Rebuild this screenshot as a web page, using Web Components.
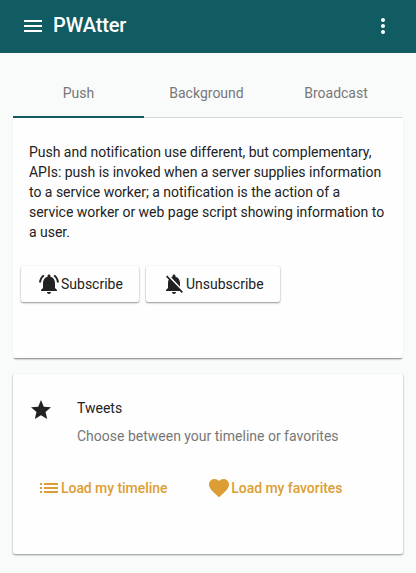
<!DOCTYPE html>
<html lang="en">
<head>
<meta charset="utf-8">
<title>PWAtter</title>
<style>
body{margin:0;height:573px;overflow:hidden;background:#f9fbfb;font-family:Roboto,"Liberation Sans",sans-serif;font-size:14px;line-height:20px;color:#222}
</style>
</head>
<body>
<pw-app></pw-app>
<script>
const icons={
menu:'M3 18h18v-2H3v2zm0-5h18v-2H3v2zm0-7v2h18V6H3z',
more:'M12 8c1.1 0 2-.9 2-2s-.9-2-2-2-2 .9-2 2 .9 2 2 2zm0 2c-1.1 0-2 .9-2 2s.9 2 2 2 2-.9 2-2-.9-2-2-2zm0 6c-1.1 0-2 .9-2 2s.9 2 2 2 2-.9 2-2-.9-2-2-2z',
bell:'M7.58 4.08L6.15 2.65C3.75 4.48 2.17 7.3 2.03 10.5h2c.15-2.65 1.51-4.97 3.55-6.42zm12.39 6.42h2c-.15-3.2-1.73-6.02-4.12-7.85l-1.42 1.43c2.02 1.45 3.39 3.77 3.54 6.42zM18 11c0-3.07-1.64-5.64-4.5-6.32V4c0-.83-.67-1.5-1.5-1.5s-1.5.67-1.5 1.5v.68C7.63 5.36 6 7.92 6 11v5l-2 2v1h16v-1l-2-2v-5zm-6 11c.14 0 .27-.01.4-.04.65-.14 1.18-.58 1.44-1.18.1-.24.15-.5.15-.78h-4c.01 1.1.9 2 2.01 2z',
bellOff:'M20 18.69L7.84 6.14 5.27 3.49 4 4.76l2.8 2.8v.01c-.52.99-.8 2.16-.8 3.42v5l-2 2v1h13.73l2 2L21 19.72l-1-1.03zM12 22c1.11 0 2-.89 2-2h-4c0 1.11.89 2 2 2zm6-7.32V11c0-3.08-1.64-5.64-4.5-6.32V4c0-.83-.67-1.5-1.5-1.5s-1.5.67-1.5 1.5v.68c-.15.03-.29.08-.42.12-.1.03-.2.07-.3.11h-.01c-.01 0-.01 0-.02.01-.23.09-.46.2-.68.31 0 0-.01 0-.01.01L18 14.68z',
star:'M12 17.27L18.18 21l-1.64-7.03L22 9.24l-7.19-.61L12 2 9.19 8.63 2 9.24l5.46 4.73L5.82 21z',
list:'M3 13h2v-2H3v2zm0 4h2v-2H3v2zm0-8h2V7H3v2zm4 4h14v-2H7v2zm0 4h14v-2H7v2zM7 7v2h14V7H7z',
heart:'M12 21.35l-1.45-1.32C5.4 15.36 2 12.28 2 8.5 2 5.42 4.42 3 7.5 3c1.74 0 3.41.81 4.5 2.09C13.09 3.81 14.76 3 16.5 3 19.58 3 22 5.42 22 8.5c0 3.78-3.4 6.86-8.55 11.54L12 21.35z'};
function define(name,html){
  customElements.define(name,class extends HTMLElement{
    constructor(){super();this.attachShadow({mode:'open'}).innerHTML=html;}
  });
}
customElements.define('pw-icon',class extends HTMLElement{
  connectedCallback(){
    if(this.shadowRoot)return;
    this.attachShadow({mode:'open'}).innerHTML=`<style>:host{display:block;flex:none;width:24px;height:24px}svg{display:block;width:100%;height:100%;fill:currentColor}</style><svg viewBox="0 0 24 24" aria-hidden="true"><path d="${icons[this.getAttribute('name')]}"/></svg>`;
  }
});
define('pw-toolbar',`<style>
:host{display:flex;align-items:center;box-sizing:border-box;height:53px;padding:0 21px 1px;background:#115b62;color:#fff}
h1{flex:1;margin:0 0 2px 8px;font-size:20px;line-height:28px;font-weight:500;letter-spacing:-.12px}
</style><pw-icon name="menu"></pw-icon><h1><slot></slot></h1><pw-icon name="more"></pw-icon>`);
define('pw-tab',`<style>
:host{display:block;text-align:center;color:#777;padding:14px 0;line-height:20px;height:20px;border-bottom:1px solid #d4d8d8}
:host([active]){border-bottom:2px solid #115b62;padding-bottom:13px}
</style><slot></slot>`);
define('pw-tabs',`<style>:host{display:grid;grid-template-columns:131px 125px 134px;padding-top:16px;margin:0 13px}</style><slot></slot>`);
define('pw-card',`<style>:host{display:block;box-sizing:border-box;margin:0 13px;background:#fefefe;border-radius:2px;box-shadow:0 1px 2px rgba(0,0,0,.42),0 0 1px rgba(0,0,0,.12)}
:host([joined]){border-radius:0 0 2px 2px;box-shadow:0 2px 2px -1px rgba(0,0,0,.5)}</style><slot></slot>`);
define('pw-button',`<style>
:host{display:flex;align-items:center;box-sizing:border-box;height:36px;padding:0 16px;border-radius:2px;white-space:nowrap}
:host([raised]){background:#fefefe;box-shadow:0 1px 2px rgba(0,0,0,.42),0 0 1px rgba(0,0,0,.12)}
:host([accent]){color:#dc9e34;font-weight:500;letter-spacing:-.06px}
</style><slot></slot>`);
define('pw-app',`<style>
:host{display:block}
.push{height:240px;padding-top:24px}
p{margin:0 16px;letter-spacing:-.02px;white-space:nowrap}
.buttons{display:flex;gap:7px;margin:24px 8px 0}
.tweets{margin-top:16px;height:180px;padding:24px 16px}
.head{display:flex;gap:24px}
.text div+div{margin-top:8px;color:#777}
.links{display:flex;margin-top:24px;gap:8px;margin-left:-8px}
.sub{width:118px}.unsub{width:134px}
</style>
<pw-toolbar>PWAtter</pw-toolbar>
<pw-tabs><pw-tab active>Push</pw-tab><pw-tab>Background</pw-tab><pw-tab>Broadcast</pw-tab></pw-tabs>
<pw-card joined class="push"><p>Push and notification use different, but complementary,<br>APIs: push is invoked when a server supplies information<br>to a service worker; a notification is the action of a<br>service worker or web page script showing information to<br>a user.</p>
<div class="buttons"><pw-button raised class="sub"><pw-icon name="bell"></pw-icon>Subscribe</pw-button><pw-button raised class="unsub"><pw-icon name="bellOff"></pw-icon>Unsubscribe</pw-button></div></pw-card>
<pw-card class="tweets"><div class="head"><pw-icon name="star"></pw-icon><div class="text"><div>Tweets</div><div>Choose between your timeline or favorites</div></div></div>
<div class="links"><pw-button accent><pw-icon name="list"></pw-icon>Load my timeline</pw-button><pw-button accent><pw-icon name="heart"></pw-icon>Load my favorites</pw-button></div></pw-card>`);
</script>
</body>
</html>
